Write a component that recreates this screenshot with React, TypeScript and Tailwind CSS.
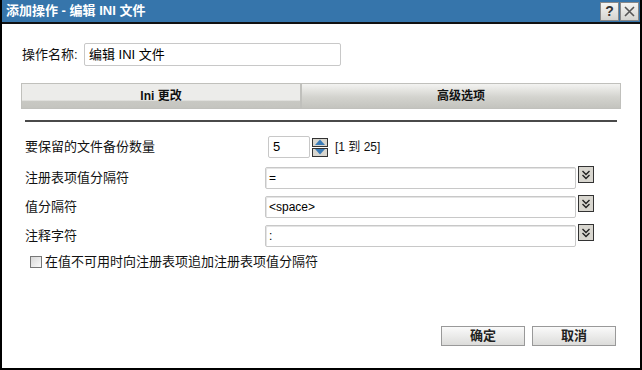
import React from "react";

const font = { fontFamily: '"Liberation Sans", "Noto Sans CJK SC", sans-serif' };

function Chevron() {
  return (
    <div className="flex h-[17px] w-[16px] items-center justify-center border border-[#333] bg-[#d8d6cf]">
      <svg width="12" height="12" viewBox="0 0 12 12" fill="none" stroke="#222" strokeWidth="1.4">
        <path d="M2.5 2 L6 5.5 L9.5 2" />
        <path d="M2.5 6 L6 9.5 L9.5 6" />
      </svg>
    </div>
  );
}

function SelectRow({ label, value }: { label: string; value: string }) {
  return (
    <div className="flex h-[29px] items-center">
      <div className="w-[240px] text-[13px] text-[#111]">{label}</div>
      <div className="flex h-[22px] w-[311px] items-center rounded-[2px] border border-[#c8c8c8] px-[3px] text-[12px] text-black shadow-[inset_1px_1px_0_#e4e4e4]">
        {value}
      </div>
      <div className="ml-[2px] self-start pt-[3px]">
        <Chevron />
      </div>
    </div>
  );
}

function TabBtn({ children, active }: { children: React.ReactNode; active?: boolean }) {
  return (
    <div
      className={`flex h-[26px] items-start justify-center border border-[#c0c0bc] pt-[3px] text-[12px] font-bold text-[#111] ${
        active
          ? "w-[280px] bg-[linear-gradient(#ececea_0,#ececea_68%,#c9c9c4_70%,#c4c4bf_100%)]"
          : "w-[320px] bg-[linear-gradient(#f3f3f1,#d3d3ce_55%,#c3c3be)]"
      }`}
    >
      {children}
    </div>
  );
}

export default function App() {
  return (
    <div className="h-[370px] w-[642px] bg-white" style={font}>
      <div className="flex h-full w-full flex-col border-x-2 border-b-2 border-black">
        <div className="flex h-[24px] items-center justify-between border-b-2 border-[#111] bg-[#3675ab] pl-[4px] pr-[1px]">
          <div className="text-[13px] font-bold text-white">添加操作 - 编辑 INI 文件</div>
          <div className="flex gap-[1px]">
            <div className="flex h-[19px] w-[19px] items-center justify-center border border-[#888] bg-[linear-gradient(#f4f4f2,#d4d4d0)] text-[14px] font-bold leading-none text-[#333]">?</div>
            <div className="flex h-[19px] w-[19px] items-center justify-center border border-[#888] bg-[linear-gradient(#f4f4f2,#d4d4d0)]">
              <svg width="11" height="11" viewBox="0 0 11 11" stroke="#555" strokeWidth="1.6">
                <path d="M1 1 L10 10 M10 1 L1 10" />
              </svg>
            </div>
          </div>
        </div>

        <div className="flex flex-col px-[19px]">
          <div className="mt-[19px] flex items-center">
            <span className="ml-[1px] w-[62px] whitespace-nowrap text-[13px] text-[#111]">操作名称:</span>
            <div className="flex h-[23px] w-[257px] items-center rounded-[2px] border border-[#c8c8c8] px-[4px] text-[13px] text-black">编辑 INI 文件</div>
          </div>

          <div className="mt-[17px] flex">
            <TabBtn active>Ini 更改</TabBtn>
            <TabBtn>高级选项</TabBtn>
          </div>

          <div className="mx-[4px] mt-[11px] h-[2px] w-[592px] bg-[#4a4a4a]" />

          <div className="mt-[12px] flex flex-col pl-[4px]">
            <div className="flex h-[26px] items-center">
              <div className="w-[243px] text-[13px] text-[#111]">要保留的文件备份数量</div>
              <div className="flex h-[22px] w-[42px] items-center rounded-[2px] border border-[#c8c8c8] px-[4px] text-[13px] text-black">5</div>
              <div className="ml-[2px] flex flex-col gap-[1px]">
                <div className="flex h-[9px] w-[16px] items-center justify-center border border-[#333] bg-[#d8d6cf]">
                  <svg width="12" height="6" viewBox="0 0 12 6"><path d="M1 6 L6 0.5 L11 6 Z" fill="#3a7cb8" /></svg>
                </div>
                <div className="flex h-[9px] w-[16px] items-center justify-center border border-[#333] bg-[#d8d6cf]">
                  <svg width="12" height="6" viewBox="0 0 12 6"><path d="M1 0 L6 5.5 L11 0 Z" fill="#3a7cb8" /></svg>
                </div>
              </div>
              <span className="ml-[7px] text-[12px] text-[#111]">[1 到 25]</span>
            </div>
            <div className="mt-[3px]">
              <SelectRow label="注册表项值分隔符" value="=" />
              <SelectRow label="值分隔符" value="<space>" />
              <SelectRow label="注释字符" value=":" />
            </div>
            <div className="ml-[5px] mt-[2px] flex items-center">
              <div className="h-[12px] w-[12px] border border-[#777] bg-[linear-gradient(135deg,#d8d8d8,#fafafa)]" />
              <span className="ml-[3px] text-[13px] text-[#111]">在值不可用时向注册表项追加注册表项值分隔符</span>
            </div>
          </div>
        </div>

        <div className="mt-auto mb-[22px] flex justify-end gap-[7px] pr-[24px]">
          <div className="flex h-[20px] w-[84px] items-center justify-center border border-[#999] bg-[linear-gradient(#fafafa,#dcdcda)] text-[13px] font-bold text-[#222]">确定</div>
          <div className="flex h-[20px] w-[84px] items-center justify-center border border-[#999] bg-[linear-gradient(#fafafa,#dcdcda)] text-[13px] font-bold text-[#222]">取消</div>
        </div>
      </div>
    </div>
  );
}
